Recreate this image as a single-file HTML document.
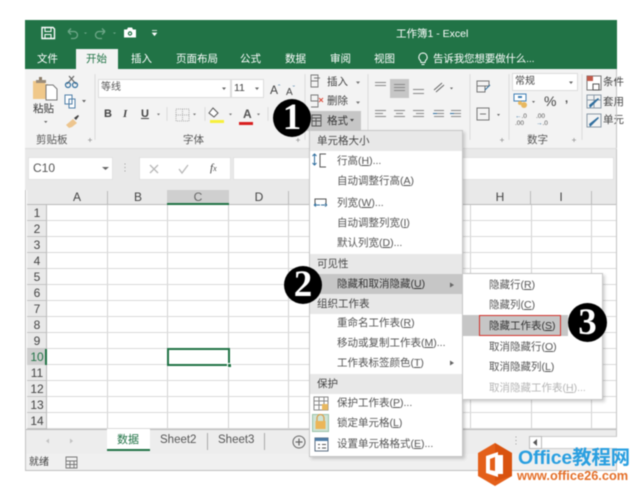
<!DOCTYPE html>
<html><head><meta charset="utf-8"><style>
html,body{margin:0;padding:0;background:#fff;width:640px;height:492px;overflow:hidden}
#r{position:relative;width:640px;height:492px;overflow:hidden;font-family:"Liberation Sans","Noto Sans CJK SC",sans-serif;color:#444;filter:blur(.5px)}
#r div,#r span.a{position:absolute;box-sizing:border-box}
.t{white-space:nowrap;font-size:10.5px;line-height:14px}
.w{color:#fff}
.m{left:337px;font-size:10.5px;line-height:14px;white-space:nowrap;color:#555}
.h{left:310px;width:152px;height:20px;background:#e8e8e8;font-size:10.5px;line-height:20px;padding-left:7px;color:#444}
.s{left:489px;font-size:10.5px;line-height:14px;white-space:nowrap;color:#555}
.rn{left:27px;width:20px;text-align:center;font-size:12px;line-height:16px;color:#444;height:16px}
.cn{top:190px;height:15px;text-align:center;font-size:12px;line-height:15px;color:#444}
.c{border-radius:50%;background:#000;color:#fff;text-align:center;font-family:"Liberation Serif",serif;font-weight:bold}
.g{color:#555;font-size:10.5px;line-height:14px;white-space:nowrap}
svg{position:absolute;overflow:visible}
</style></head><body><div id="r">
<!-- window -->
<div style="left:25px;top:20px;width:592px;height:451px;background:#fff;border:1px solid #c4c4c4;border-top:0"></div>
<div style="left:25px;top:20px;width:592px;height:49px;background:#217346"></div>
<div style="left:76px;top:49px;width:42px;height:20px;background:#f3f3f3"></div>
<div style="left:25px;top:69px;width:592px;height:79px;background:#f3f3f3"></div>
<div style="left:25px;top:148px;width:592px;height:42px;background:#e9e9e9"></div>
<!-- QAT -->
<svg style="left:0;top:0" width="640" height="60" fill="none">
<path d="M42 27.5h11l1.5 1.5v9.500h-12.500z" stroke="#fff" stroke-width="1.400"/>
<path d="M45 28v3.500h6V28M45 38v-3.500h6V38" stroke="#fff"/>
<path d="M68 31.500l3-3M68 31.500l3 3M68 31.500h6a3.500 3.500 0 0 1 0 7h-3" stroke="#6ea788" stroke-width="1.300"/>
<path d="M84 32.500h3l-1.500 1.500z M113 32.500h3l-1.500 1.500z" fill="#6ea788"/>
<path d="M105 31.500l-3-3M105 31.500l-3 3M105 31.500h-6a3.500 3.500 0 0 0 0 7h3" stroke="#6ea788" stroke-width="1.300"/>
<path d="M124 29.500h3l1-2h4l1 2h3v8h-12z" fill="#fff"/><circle cx="130" cy="33.500" r="2.200" fill="#217346"/><circle cx="130" cy="33.500" r="1" fill="#fff"/>
<path d="M152 30.500h5M152.500 33h4l-2 2.500z" stroke="#fff" fill="#fff" stroke-width=".8"/>
</svg>
<div class="t w" style="left:396px;top:27px;font-size:10.500px">工作簿1 - Excel</div>
<div class="t w" style="left:37px;top:52px">文件</div>
<div class="t" style="left:86px;top:52px;color:#217346">开始</div>
<div class="t w" style="left:131px;top:52px">插入</div>
<div class="t w" style="left:176px;top:52px">页面布局</div>
<div class="t w" style="left:240px;top:52px">公式</div>
<div class="t w" style="left:285px;top:52px">数据</div>
<div class="t w" style="left:330px;top:52px">审阅</div>
<div class="t w" style="left:374px;top:52px">视图</div>
<svg style="left:417px;top:52px" width="14" height="15" fill="none"><path d="M6 1a4.200 4.200 0 0 0-2.500 7.500L4 10.500h4l.5-2A4.200 4.200 0 0 0 6 1zM4.500 12.500h3" stroke="#fff"/></svg>
<div class="t w" style="left:433px;top:52px;letter-spacing:-.15px">告诉我您想要做什么...</div>
<!-- clipboard -->
<svg style="left:0;top:0" width="640" height="150" fill="none">
<path d="M33 81h12v3h3v15H33z" fill="#f0c88a"/><path d="M39 77h3v3h-3z" fill="#8a7b68"/><path d="M36 80h10v3H36z" fill="#9a8c7a"/>
<path d="M46 85h7l4 4v11H46z" fill="#fff" stroke="#777"/>
<path d="M67 84l7-8M76 84l-7-8" stroke="#666" stroke-width="1.200"/><circle cx="68" cy="85" r="2.500" stroke="#2f6e9e" stroke-width="1.200"/><circle cx="75" cy="85" r="2.500" stroke="#2f6e9e" stroke-width="1.200"/>
<path d="M65 95h7v9h-7zM69 99h6v9h-6z" fill="#fff" stroke="#4f7ea8"/>
<path d="M66 125l7-6 4 4-5 4-3 1z" fill="#edc58e"/><path d="M74 118l4-3 1 1-3 4z" fill="#444"/>
<path d="M82 100h4l-2 2.500zM44 121h3.500l-1.750 2z" fill="#666"/>
<path d="M95 74v66M305 74v66M368 74v66M470 74v66M509 74v66M582 74v66" stroke="#dcdcdc"/>
<path d="M167 107v14M205 107v14M268 107v14" stroke="#dcdcdc"/>
<path d="M88 140h4M90 138v4" stroke="#999" stroke-width=".8"/>
<path d="M296 140h4M298 138v4M500 140h4M502 138v4M572 140h4M574 138v4" stroke="#999" stroke-width=".8"/>
</svg>
<div class="t" style="left:33px;top:102px;color:#333">粘贴</div>
<div class="t g" style="left:36px;top:133px">剪贴板</div>
<div class="t g" style="left:183px;top:133px">字体</div>
<!-- font -->
<div style="left:98px;top:79px;width:133px;height:19px;background:#fff;border:1px solid #ddd"></div>
<div style="left:231px;top:79px;width:33px;height:19px;background:#fff;border:1px solid #ddd"></div>
<div class="t" style="left:101px;top:81px;color:#555;font-size:10px">等线</div>
<div class="t" style="left:234px;top:81px;font-size:10.500px">11</div>
<svg style="left:0;top:0" width="640" height="150" fill="none">
<path d="M222 87.500h4l-2 2.500zM255 87.500h4l-2 2.500z" fill="#666"/>
<path d="M157 113.500h3l-1.500 2zM193 113.500h3l-1.500 2zM229 113.500h3l-1.500 2zM257 113.500h3l-1.500 2z" fill="#777"/>
<path d="M176 109h13v12h-13zM182.500 109v12M176 115h13" stroke="#aaa" stroke-dasharray="1 1"/>
<path d="M213 108l5 5-4 4-5-4z" fill="#fff" stroke="#555"/><path d="M210 120h14v3h-14z" fill="#f6f03c"/>
<path d="M239 122h14v3h-14z" fill="#d82020"/>
</svg>
<div class="t" style="left:270px;top:82px;font-size:12px">A<span style="font-size:7px;vertical-align:4px;color:#2f6e9e">ˆ</span></div>
<div class="t" style="left:286px;top:83px;font-size:10px">A<span style="font-size:7px;vertical-align:4px;color:#2f6e9e">ˇ</span></div>
<div class="t" style="left:104px;top:107px;font-weight:bold;font-size:11px;font-family:'Liberation Sans'">B</div>
<div class="t" style="left:123px;top:107px;font-style:italic;font-weight:bold;font-size:11px;font-family:'Liberation Serif'">I</div>
<div class="t" style="left:141px;top:107px;font-weight:bold;font-size:11px;text-decoration:underline">U</div>
<div class="t" style="left:243px;top:107px;font-weight:bold;font-size:12px;color:#555">A</div>
<!-- cells -->
<div style="left:306px;top:111px;width:55px;height:20px;background:#c6c6c6"></div>
<svg style="left:0;top:0" width="640" height="150" fill="none">
<path d="M311 75h7v6h-7zM311 81h7v6h-7zM314 78h6" stroke="#777" stroke-width=".9"/>
<path d="M311 95h7v6h-7zM311 101h7v6h-7" stroke="#777" stroke-width=".9"/><path d="M319 98l4 4M323 98l-4 4" stroke="#dc4a3a"/>
<path d="M312 115h9v11h-9zM312 118h9M312 121h9M316 118v8" stroke="#555" stroke-width=".9"/>
<path d="M356 81.500h4l-2 2.500zM356 101.500h4l-2 2.500z" fill="#777"/>
</svg>
<div class="t" style="left:327px;top:75px;color:#444">插入</div>
<div class="t" style="left:327px;top:94px;color:#444">删除</div>
<div class="t" style="left:327px;top:114px;color:#333">格式</div>
<svg style="left:350px;top:0" width="8" height="130"><path d="M0 119h4l-2 2.500z" fill="#444"/></svg>
<!-- alignment -->
<div style="left:390px;top:79px;width:19px;height:19px;background:#c6c6c6"></div>
<svg style="left:0;top:0" width="640" height="150" fill="none" stroke="#888" stroke-width="1">
<path d="M375 82.500h11M375 85.500h11M394 84.500h11M394 87.500h11M394 90.500h11M413 89.500h11M413 93.500h11"/>
<path d="M375 110.500h11M375 113.500h8M375 116.500h11M394 110.500h11M396 113.500h7M394 116.500h11M413 110.500h11M416 113.500h8M413 116.500h11M434 110.500h10M437 113.500h7M434 116.500h10M451 110.500h10M454 113.500h7M451 116.500h10"/>
<path d="M433 113.500h4M450 113.500h4" stroke="#2f6e9e"/>
<path d="M434 90l8-7M436 92l8-7" stroke="#666"/>
<path d="M477 81h12v5h-12zM477 86h8v6h-8z" stroke="#777"/><path d="M485 90l5-5" stroke="#2f6e9e"/>
<path d="M477 108h12v12h-12zM480 114h6" stroke="#777"/>
<path d="M450 87.500h3l-1.500 2zM497 114h3l-1.500 2z" fill="#666" stroke="none"/>
</svg>
<!-- number -->
<div style="left:512px;top:73px;width:66px;height:18px;background:#fff;border:1px solid #ddd"></div>
<div class="t" style="left:515px;top:75px;font-size:10px">常规</div>
<svg style="left:0;top:0" width="640" height="150" fill="none">
<path d="M569 81.500h4l-2 2.500zM532 101h3l-1.500 2z" fill="#666"/>
<path d="M514 94h12v7h-12z" fill="#fff" stroke="#3f7fb5"/><path d="M518 97h4" stroke="#3f7fb5" stroke-width="2"/><circle cx="524" cy="105" r="3" fill="#e8b860"/><circle cx="520" cy="103" r="2" fill="#e8b860"/>
<path d="M587 76h14v14h-14z" stroke="#777" fill="#fff"/><path d="M587 76h6v5h-6z" fill="#c35a4a"/><path d="M593 84h6v6h-6z" stroke="#555"/>
<path d="M587 95h14v13h-14zM587 100h14M594 95v13" stroke="#8a9aa8"/><path d="M590 108l9-9-1-1-9 7z" fill="#2f6e9e"/>
<path d="M587 114h14v13h-14z" stroke="#8a9aa8"/><path d="M590 127l9-9-1-1-9 7z" fill="#2f6e9e"/>
</svg>
<div class="t" style="left:544px;top:93px;font-size:14px;line-height:16px">%</div>
<div class="t" style="left:565px;top:92px;font-weight:bold;font-size:11px">,</div>
<div class="t" style="left:515px;top:113px;font-size:6.500px;line-height:7px;color:#555"><span style="color:#2f6e9e">←</span>.0<br>.00</div>
<div class="t" style="left:536px;top:113px;font-size:6.500px;line-height:7px;color:#555">.00<br><span style="color:#2f6e9e">→</span>.0</div>
<div class="t g" style="left:527px;top:133px">数字</div>
<div class="t" style="left:603px;top:75px;color:#444">条件</div>
<div class="t" style="left:603px;top:95px;color:#444">套用</div>
<div class="t" style="left:603px;top:113px;color:#444">单元</div>
<div style="left:616px;top:69px;width:1px;height:400px;background:#c4c4c4"></div>
<div style="left:25px;top:148px;width:592px;height:1px;background:#dcdcdc"></div>
<!-- formula bar -->
<div style="left:28px;top:157px;width:85px;height:23px;background:#fff;border:1px solid #e2e2e2"></div>
<div style="left:139px;top:157px;width:92px;height:23px;background:#fff;border:1px solid #e2e2e2"></div>
<div style="left:233px;top:157px;width:381px;height:23px;background:#fff;border:1px solid #e2e2e2"></div>
<div class="t" style="left:33px;top:160px;font-size:12px;line-height:16px;color:#555">C10</div>
<svg style="left:0;top:0" width="640" height="190" fill="none">
<path d="M102 167h7l-3.500 3z" fill="#666"/>
<path d="M125 163.500v1M125 167v1M125 170.500v1" stroke="#999"/>
<path d="M150 165l8 8M158 165l-8 8" stroke="#b9b9b9" stroke-width="1.300"/>
<path d="M179 169l3 4 6-8" stroke="#b9b9b9" stroke-width="1.300"/>
<path d="M30 203l14-12v12z" fill="#b5b5b5"/>
</svg>
<div class="t" style="left:210px;top:161px;font-family:'Liberation Serif';font-style:italic;font-size:11px;color:#444">f<span style="font-size:8px">x</span></div>
<!-- grid -->
<div style="left:47px;top:205px;width:569px;height:224px;background-color:#fff;background-image:repeating-linear-gradient(to bottom,transparent 0,transparent 15px,#dadada 15px,#dadada 16px),linear-gradient(to right,transparent 60px,#d2d2d2 60px,#d2d2d2 61px,transparent 61px,transparent 120px,#d2d2d2 120px,#d2d2d2 121px,transparent 121px,transparent 181px,#d2d2d2 181px,#d2d2d2 182px,transparent 182px,transparent 241px,#d2d2d2 241px,#d2d2d2 242px,transparent 242px,transparent 423px,#d2d2d2 423px,#d2d2d2 424px,transparent 424px,transparent 484px,#d2d2d2 484px,#d2d2d2 485px,transparent 485px,transparent 544px,#d2d2d2 544px,#d2d2d2 545px,transparent 545px)"></div>
<div style="left:27px;top:190px;width:589px;height:15px;background:#e9e9e9;border-bottom:1px solid #bbb"></div>
<div style="left:27px;top:205px;width:20px;height:224px;background:#e9e9e9;background-image:repeating-linear-gradient(to bottom,transparent 0,transparent 15px,#c4c4c4 15px,#c4c4c4 16px);border-right:1px solid #bbb"></div>
<div style="left:167px;top:190px;width:62px;height:15px;background:#cfcfcf;border-bottom:2px solid #217346"></div>
<div style="left:27px;top:349px;width:20px;height:16px;background:#cfcfcf;border-right:2px solid #217346"></div>
<div style="left:107px;top:191px;width:1px;height:14px;background:#bbb"></div>
<div style="left:288px;top:191px;width:1px;height:14px;background:#bbb"></div>
<div style="left:530px;top:191px;width:1px;height:14px;background:#bbb"></div>
<div style="left:591px;top:191px;width:1px;height:14px;background:#bbb"></div>
<div class="cn" style="left:47px;width:60px">A</div>
<div class="cn" style="left:108px;width:60px">B</div>
<div class="cn" style="left:168px;width:60px;color:#666">C</div>
<div class="cn" style="left:229px;width:60px">D</div>
<div class="cn" style="left:470px;width:60px">H</div>
<div class="cn" style="left:531px;width:60px">I</div>
<div class="rn" style="top:205px">1</div><div class="rn" style="top:221px">2</div><div class="rn" style="top:237px">3</div><div class="rn" style="top:253px">4</div><div class="rn" style="top:269px">5</div><div class="rn" style="top:285px">6</div><div class="rn" style="top:301px">7</div><div class="rn" style="top:317px">8</div><div class="rn" style="top:333px">9</div><div class="rn" style="top:349px;color:#217346">10</div><div class="rn" style="top:365px">11</div><div class="rn" style="top:381px">12</div><div class="rn" style="top:397px">13</div><div class="rn" style="top:413px">14</div>
<div style="left:167px;top:348px;width:63px;height:18px;border:2px solid #217346"></div>
<div style="left:227px;top:363px;width:5px;height:5px;background:#217346;border:1px solid #fff"></div>
<!-- tabs -->
<div style="left:26px;top:429px;width:590px;height:25px;background:#ededed;border-top:1px solid #bbb"></div>
<div style="left:26px;top:454px;width:590px;height:16px;background:#f0f0f0"></div>
<div style="left:25px;top:470px;width:592px;height:1px;background:#c0c0c0"></div>
<div style="left:107px;top:429px;width:43px;height:22px;background:#fff;border-bottom:2px solid #217346"></div>
<div class="t" style="left:117px;top:433px;color:#217346;font-size:11px">数据</div>
<div class="t" style="left:160px;top:433px;font-size:11.500px;line-height:15px;color:#555">Sheet2</div>
<div class="t" style="left:218px;top:433px;font-size:11.500px;line-height:15px;color:#555">Sheet3</div>
<div style="left:207px;top:433px;width:1px;height:17px;background:#aaa"></div>
<div style="left:264px;top:433px;width:1px;height:17px;background:#aaa"></div>
<svg style="left:0;top:0" width="640" height="492" fill="none">
<circle cx="299" cy="442" r="6" stroke="#666"/><path d="M295.500 442h7M299 438.500v7" stroke="#666" stroke-width="1.200"/>
<path d="M46 441l3-2.500v5zM73 441l-3-2.500v5z" fill="#c2c2c2"/>
<path d="M66 457h11v11H66zM66 461h11M70 461v7M74 461v7M66 464.500h11" stroke="#777" stroke-width=".9"/>
<path d="M516 436.500v1M516 440v1M516 443.500v1" stroke="#999"/>
</svg>
<div class="t" style="left:29px;top:456px;font-size:10px;color:#444">就绪</div>
<div style="left:529px;top:436px;width:13px;height:13px;background:#fff;border:1px solid #bbb"></div>
<svg style="left:533px;top:439px" width="6" height="8"><path d="M4 0v7L0 3.500z" fill="#555"/></svg>
<div style="left:542px;top:436px;width:75px;height:13px;background:#fff;border-top:1px solid #ccc;border-bottom:1px solid #ccc"></div>
<!-- main menu -->
<div style="left:309px;top:130px;width:154px;height:327px;background:#fff;border:1px solid #c6c6c6;box-shadow:2px 2px 3px rgba(0,0,0,.18)"></div>
<div class="h" style="top:131px">单元格大小</div>
<div class="m" style="top:154px">行高(<u>H</u>)...</div>
<div class="m" style="top:174px">自动调整行高(<u>A</u>)</div>
<div class="m" style="top:196px">列宽(<u>W</u>)...</div>
<div class="m" style="top:216px">自动调整列宽(<u>I</u>)</div>
<div class="m" style="top:236px">默认列宽(<u>D</u>)...</div>
<div class="h" style="top:254px">可见性</div>
<div style="left:310px;top:274px;width:152px;height:20px;background:#c6c6c6"></div>
<div class="m" style="top:277px;color:#333">隐藏和取消隐藏(<u>U</u>)</div>
<div class="h" style="top:294px">组织工作表</div>
<div class="m" style="top:316px">重命名工作表(<u>R</u>)</div>
<div class="m" style="top:336px">移动或复制工作表(<u>M</u>)...</div>
<div class="m" style="top:356px">工作表标签颜色(<u>T</u>)</div>
<div class="h" style="top:374px">保护</div>
<div class="m" style="top:396px">保护工作表(<u>P</u>)...</div>
<div class="m" style="top:416px">锁定单元格(<u>L</u>)</div>
<div class="m" style="top:437px">设置单元格格式(<u>E</u>)...</div>
<div style="left:312px;top:414px;width:17px;height:18px;background:#cfe4d6;border:1px solid #9cc3aa"></div>
<svg style="left:0;top:0" width="640" height="492" fill="none">
<path d="M314.500 154v11M312.500 156l2-2 2 2M312.500 163l2 2 2-2" stroke="#2f6e9e"/>
<path d="M326 154h-6v13h6" stroke="#555"/>
<path d="M315 206v-7h11v7" stroke="#555"/><path d="M314 205h6M325 205h-4M314 205l2-1.500M314 205l2 1.500M327 205l-2-1.500M327 205l-2 1.500" stroke="#2f6e9e"/>
<path d="M450 282.500l4 2.500-4 2.500zM450 360.500l4 2.500-4 2.500z" fill="#666"/>
<path d="M314 397h14v13h-14zM314 401h14M314 405h14M319 397v13M324 397v13" stroke="#888"/><path d="M322 404h6v6h-6z" fill="#e8b860"/>
<path d="M317 421v-3a3.500 3.500 0 0 1 7 0v3" stroke="#d8a050" stroke-width="1.300"/><path d="M315.500 421h10v8h-10z" fill="#ecb658"/>
<path d="M315 438h13v13h-13z" stroke="#5a6d80" fill="#fff"/><path d="M315 438h13v3h-13z" fill="#4f7ea8"/><path d="M318 444.500h2M322 444.500h4M318 448h2M322 448h4" stroke="#555"/>
</svg>
<!-- sub menu -->
<div style="left:462px;top:273px;width:141px;height:127px;background:#fff;border:1px solid #c6c6c6;box-shadow:2px 2px 3px rgba(0,0,0,.18)"></div>
<div class="s" style="top:278px">隐藏行(<u>R</u>)</div>
<div class="s" style="top:298px">隐藏列(<u>C</u>)</div>
<div style="left:463px;top:315px;width:105px;height:21px;background:#c6c6c6"></div>
<div class="s" style="top:319px;color:#333">隐藏工作表(<u>S</u>)</div>
<div style="left:479px;top:315px;width:82px;height:21px;border:1.500px solid #d2322d"></div>
<div class="s" style="top:340px">取消隐藏行(<u>O</u>)</div>
<div class="s" style="top:360px">取消隐藏列(<u>L</u>)</div>
<div class="s" style="top:381px;color:#b5b5b5">取消隐藏工作表(<u>H</u>)...</div>
<!-- circles -->
<div class="c" style="left:273px;top:99px;width:38px;height:38px;font-size:37px;line-height:38px">1</div>
<div class="c" style="left:284px;top:266px;width:38px;height:38px;font-size:37px;line-height:38px">2</div>
<div class="c" style="left:568px;top:303px;width:39px;height:39px;font-size:37px;line-height:39px">3</div>
<!-- logo -->
<svg style="left:477px;top:443px" width="36" height="44">
<path d="M18 0L35 10V33L18 43L1 33V10z" fill="#e4601a"/>
<path d="M18 38L35 33V10L18 0z" fill="#d9530f"/>
<path d="M9 13L21 9V34L9 30z" fill="#fff"/><path d="M13 16V27L18 28V14z" fill="#e4601a"/><path d="M21 12h5v19h-5z" fill="#fff"/>
</svg>
<div style="left:518px;top:446px;font-size:19.500px;line-height:24px;font-weight:bold;color:#2a9fe0;white-space:nowrap;letter-spacing:-.2px">Office教程网</div>
<div style="left:517px;top:468px;font-size:12.800px;line-height:15px;font-weight:bold;color:#e4702a;white-space:nowrap">www.office26.com</div>
</div></body></html>
